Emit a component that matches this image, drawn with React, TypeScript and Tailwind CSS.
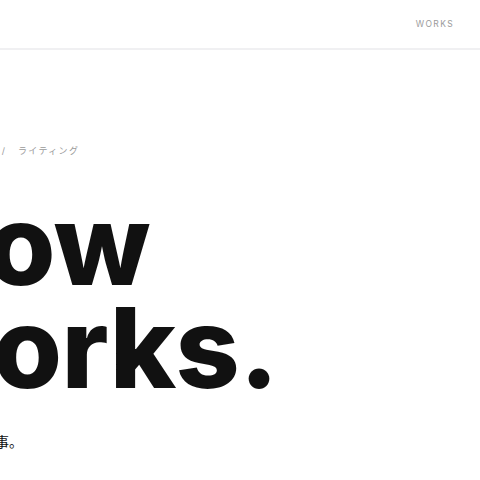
const App = () => {
  return (
    <div
      className="w-[480px] h-[480px] overflow-hidden bg-white text-[#111]"
      style={{ fontFamily: "Inter, 'Noto Sans CJK JP', sans-serif" }}
    >
      <header className="h-[50px] border-b-2 border-[#f0f0f2] flex items-center justify-end pr-[26px]">
        <nav className="text-[8.5px] tracking-[0.16em] text-[#9a9a9a]">WORKS</nav>
      </header>

      <main className="-ml-[80px] pt-[96px]">
        <p className="pl-[30px] text-[9px] tracking-[0.15em] text-[#9a9a9a] leading-none whitespace-nowrap">
          WORKS&nbsp;&nbsp;&nbsp;/&nbsp;&nbsp;&nbsp;ライティング
        </p>
        <h1 className="mt-[38px] text-[112px] font-extrabold leading-[103px] tracking-[-0.005em] whitespace-nowrap">
          <span className="block -ml-[17px]">How</span>
          <span className="block -ml-[22px]">works.</span>
        </h1>
        <p className="mt-[36px] -ml-[23px] text-[14px] leading-none whitespace-nowrap">ことばを紡ぐ仕事。</p>
      </main>
    </div>
  );
};

export default App;
